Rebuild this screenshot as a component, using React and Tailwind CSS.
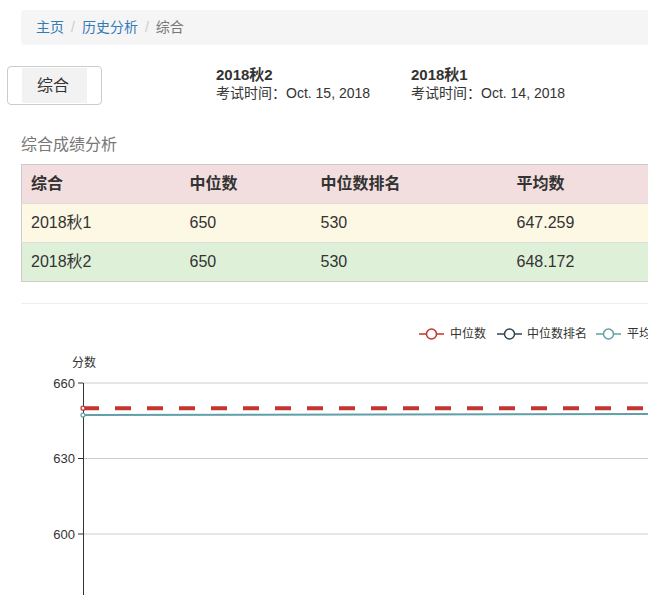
import React from "react";

const rows = [
  { name: "2018秋1", median: 650, rank: 530, mean: "647.259", bg: "bg-[#fcf8e3]" },
  { name: "2018秋2", median: 650, rank: 530, mean: "648.172", bg: "bg-[#dff0d8]" },
];

const exams = [
  { title: "2018秋2", date: "Oct. 15, 2018" },
  { title: "2018秋1", date: "Oct. 14, 2018" },
];

function LegendIcon({ color }) {
  return (
    <g stroke={color} strokeWidth="1.5" fill="#fff">
      <line x1="0" y1="0" x2="25" y2="0" />
      <circle cx="12.5" cy="0" r="5" />
    </g>
  );
}

function Chart() {
  // y offset: svg top sits at page y=304
  const top = 304;
  const yOf = (v) => 383 + ((660 - v) / 30) * 75.5 - top;
  const ticks = [660, 630, 600];
  return (
    <svg width="648" height="291" className="block" style={{ fontFamily: "'Liberation Sans', 'Noto Sans CJK SC', sans-serif" }}>
      <g transform="translate(419,30)">
        <LegendIcon color="#c23531" />
        <text x="31" y="4" fontSize="12" fill="#333">中位数</text>
      </g>
      <g transform="translate(497,30)">
        <LegendIcon color="#2f4554" />
        <text x="30" y="4" fontSize="12" fill="#333">中位数排名</text>
      </g>
      <g transform="translate(596,30)">
        <LegendIcon color="#61a0a8" />
        <text x="31" y="4" fontSize="12" fill="#333">平均数</text>
      </g>

      <text x="84" y="63" fontSize="12" fill="#333" textAnchor="middle">分数</text>

      {ticks.map((t) => (
        <g key={t}>
          <line x1="83" y1={yOf(t)} x2="648" y2={yOf(t)} stroke="#ccc" strokeWidth="1" />
          <line x1="78" y1={yOf(t)} x2="83" y2={yOf(t)} stroke="#333" strokeWidth="1" />
          <text x="75" y={yOf(t) + 4.5} fontSize="13" fill="#333" textAnchor="end">{t}</text>
        </g>
      ))}
      <line x1="83.5" y1={yOf(660)} x2="83.5" y2="291" stroke="#333" strokeWidth="1" />

      <line x1="83" y1={yOf(650)} x2="648" y2={yOf(650)} stroke="#c23531" strokeWidth="4" strokeDasharray="16 16" />
      <line x1="83" y1={yOf(647.259)} x2="648" y2={yOf(647.7)} stroke="#61a0a8" strokeWidth="2" />
      <circle cx="83" cy={yOf(650)} r="2" fill="#fff" stroke="#c23531" strokeWidth="1.2" />
      <circle cx="83" cy={yOf(647.259)} r="2" fill="#fff" stroke="#61a0a8" strokeWidth="1.2" />
    </svg>
  );
}

export default function App() {
  return (
    <div className="w-[648px] h-[595px] overflow-hidden bg-white text-[#333] font-['Liberation_Sans','Noto_Sans_CJK_SC',sans-serif]">
      <div className="w-[1000px]">
        <div className="ml-[21px] mt-[10px] h-[35px] bg-[#f5f5f5] rounded-l-[4px] flex items-center pl-[15px] text-[14px]">
          <span className="text-[#337ab7]">主页</span>
          <span className="text-[#ccc] px-[7px]">/</span>
          <span className="text-[#337ab7]">历史分析</span>
          <span className="text-[#ccc] px-[7px]">/</span>
          <span className="text-[#777]">综合</span>
        </div>

        <div className="flex mt-[21px]">
          <div className="ml-[7px] w-[95px] h-[39px] border border-[#ccc] rounded-[4px] flex pl-[14px]">
            <span className="w-[65px] my-[1px] bg-[#f2f2f2] flex items-center justify-center pr-[3px] text-[16px] text-[#333]">综合</span>
          </div>
          <div className="flex ml-[114px]">
            {exams.map((e) => (
              <div key={e.title} className="w-[195px]">
                <div className="text-[15px] font-bold leading-[18px]">{e.title}</div>
                <div className="text-[14px] leading-[18px]">考试时间：{e.date}</div>
              </div>
            ))}
          </div>
        </div>

        <div className="ml-[21px] mt-[29px] text-[16px] leading-[22px] text-[#777]">综合成绩分析</div>

        <table className="ml-[21px] mt-[8px] w-[700px] border border-[#ccc] border-collapse text-[16px]">
          <thead>
            <tr className="bg-[#f2dede] h-[39px]">
              <th className="w-[160px] text-left font-bold pl-[9px]">综合</th>
              <th className="w-[131px] text-left font-bold pl-[8px]">中位数</th>
              <th className="w-[195px] text-left font-bold pl-[8px]">中位数排名</th>
              <th className="text-left font-bold pl-[9px]">平均数</th>
            </tr>
          </thead>
          <tbody>
            {rows.map((r) => (
              <tr key={r.name} className={`${r.bg} h-[39px] border-t border-[#ddd]`}>
                <td className="pl-[9px]">{r.name}</td>
                <td className="pl-[8px]">{r.median}</td>
                <td className="pl-[8px]">{r.rank}</td>
                <td className="pl-[9px]">{r.mean}</td>
              </tr>
            ))}
          </tbody>
        </table>

        <div className="ml-[21px] mt-[21px] h-px bg-[#eee]" />

        <Chart />
      </div>
    </div>
  );
}
